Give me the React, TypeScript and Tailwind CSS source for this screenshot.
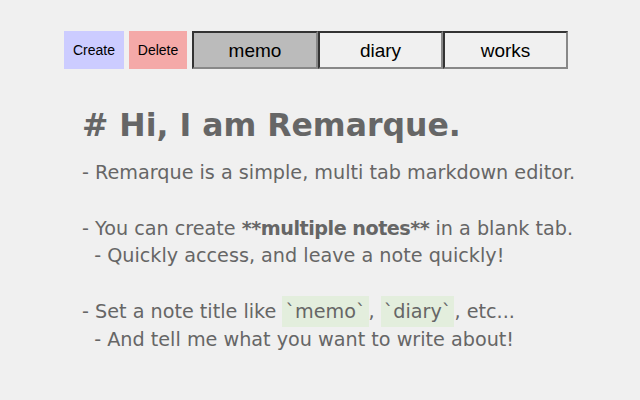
import React from "react";

export default function App() {
  const font = { fontFamily: '"DejaVu Sans", sans-serif' };
  const tab = "h-[38px] text-[19px] text-black border-2 border-t-[#333] border-l-[#333] border-r-[#888] border-b-[#888] pt-[2px]";
  return (
    <div className="w-[640px] h-[400px] bg-[#f0f0f0] overflow-hidden">
      <div className="flex items-stretch pt-[31px] pl-[64px] gap-[5px]" style={{ fontFamily: '"Liberation Sans", Arial, sans-serif' }}>
        <button className="w-[60px] h-[38px] bg-[#ccccff] text-[14px] text-black">Create</button>
        <button className="w-[58px] h-[38px] bg-[#f4a9a8] text-[14px] text-black">Delete</button>
        <div className="flex">
          <button className={`w-[126px] bg-[#bbbbbb] ${tab}`}>memo</button>
          <button className={`w-[125px] bg-[#f0f0f0] ${tab}`}>diary</button>
          <button className={`w-[125px] bg-[#f0f0f0] ${tab}`}>works</button>
        </div>
      </div>
      <div className="pl-[82px] pt-[32px] text-[#666666]" style={font}>
        <div className="text-[31.5px] font-bold leading-[48px]"># Hi, I am Remarque.</div>
        <div className="text-[19.2px] leading-[27.8px] whitespace-pre mt-[10px]">
          <div>- Remarque is a simple, multi tab markdown editor.</div>
          <div>&nbsp;</div>
          <div>- You can create <b className="tracking-[-0.5px]">**multiple notes**</b> in a blank tab.</div>
          <div>{"  - Quickly access, and leave a note quickly!"}</div>
          <div>&nbsp;</div>
          <div>
            - Set a note title like <span className="bg-[#e3eedd] px-[3px] py-[4px]">`memo`</span>, <span className="bg-[#e3eedd] px-[3px] py-[4px]">`diary`</span>, etc...
          </div>
          <div>{"  - And tell me what you want to write about!"}</div>
        </div>
      </div>
    </div>
  );
}
